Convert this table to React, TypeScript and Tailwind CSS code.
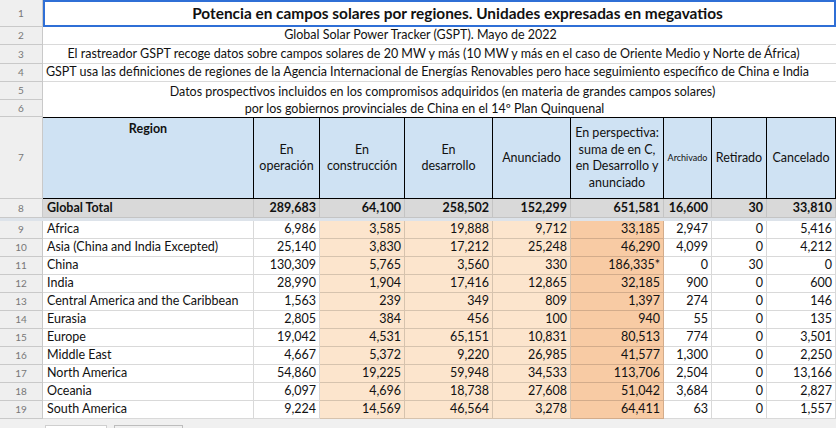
import React from "react";

const COLS = "grid-cols-[43px_211px_66px_85px_88px_78px_93px_48px_55px_69px]";

const data: string[][] = [
  ["Africa", "6,986", "3,585", "19,888", "9,712", "33,185", "2,947", "0", "5,416"],
  ["Asia (China and India Excepted)", "25,140", "3,830", "17,212", "25,248", "46,290", "4,099", "0", "4,212"],
  ["China", "130,309", "5,765", "3,560", "330", "186,335*", "0", "30", "0"],
  ["India", "28,990", "1,904", "17,416", "12,865", "32,185", "900", "0", "600"],
  ["Central America and the Caribbean", "1,563", "239", "349", "809", "1,397", "274", "0", "146"],
  ["Eurasia", "2,805", "384", "456", "100", "940", "55", "0", "135"],
  ["Europe", "19,042", "4,531", "65,151", "10,831", "80,513", "774", "0", "3,501"],
  ["Middle East", "4,667", "5,372", "9,220", "26,985", "41,577", "1,300", "0", "2,250"],
  ["North America", "54,860", "19,225", "59,948", "34,533", "113,706", "2,504", "0", "13,166"],
  ["Oceania", "6,097", "4,696", "18,738", "27,608", "51,042", "3,684", "0", "2,827"],
  ["South America", "9,224", "14,569", "46,564", "3,278", "64,411", "63", "0", "1,557"],
];

const total = ["Global Total", "289,683", "64,100", "258,502", "152,299", "651,581", "16,600", "30", "33,810"];

// fill per data column (index 0 = region)
const fills = ["bg-white", "bg-white", "bg-[#fce5cd]", "bg-[#fce5cd]", "bg-[#fce5cd]", "bg-[#f8cba4]", "bg-white", "bg-white", "bg-white"];

function RowNum({ n, className = "" }: { n: number | string; className?: string }) {
  return (
    <div
      className={`flex items-center justify-center border-r border-b border-[#c9c9c9] bg-[#efefef] text-[10px] text-[#777] ${className}`}
    >
      {n}
    </div>
  );
}

export default function App() {
  return (
    <div className="h-[428px] w-[836px] overflow-hidden bg-[#f0f0f0] font-['Lato',sans-serif] text-[12.5px] text-[#111]">
      <div
        className={`grid ${COLS} grid-rows-[27px_18px_19px_18px_18px_17px_82px_19px_3px_repeat(11,18px)]`}
      >
        {/* row 1 */}
        <RowNum n={1} />
        <div className="col-span-9 flex items-center justify-center whitespace-nowrap border-2 border-[#2f6fd6] bg-white pl-[36px] text-[15.4px] font-bold">
          Potencia en campos solares por regiones. Unidades expresadas en megavatios
        </div>

        {/* rows 2-4 */}
        <RowNum n={2} />
        <div className="col-span-9 flex items-center justify-center whitespace-nowrap border-b border-[#dadada] bg-white pr-[38px]">
          Global Solar Power Tracker (GSPT). Mayo de 2022
        </div>
        <RowNum n={3} />
        <div className="col-span-9 flex items-center justify-center whitespace-nowrap border-b border-[#dadada] bg-white pr-[12px]">
          El rastreador GSPT recoge datos sobre campos solares de 20 MW y más (10 MW y más en el caso de Oriente Medio y Norte de África)
        </div>
        <RowNum n={4} />
        <div className="col-span-9 flex items-center justify-center whitespace-nowrap border-b border-[#dadada] bg-white pr-[24px]">
          GSPT usa las definiciones de regiones de la Agencia Internacional de Energías Renovables pero hace seguimiento específico de China e India
        </div>

        {/* rows 5-6 merged */}
        <RowNum n={5} />
        <div className="col-span-9 row-span-2 flex flex-col items-center justify-center whitespace-nowrap bg-white leading-[17px]">
          <span className="pl-[6px]">Datos prospectivos incluidos en los compromisos adquiridos (en materia de grandes campos solares)</span>
          <span className="pr-[30px]">por los gobiernos provinciales de China en el 14º Plan Quinquenal</span>
        </div>
        <RowNum n={6} className="col-start-1" />

        {/* row 7 header */}
        <RowNum n={7} />
        <div className="flex justify-center border-y border-r border-black bg-[#cfe2f3] pt-[2px] font-bold">Region</div>
        {[
          ["En", "operación"],
          ["En", "construcción"],
          ["En", "desarrollo"],
          ["Anunciado"],
          ["En perspectiva:", "suma de en C,", "en Desarrollo y", "anunciado"],
        ].map((lines, i) => (
          <div
            key={i}
            className="flex flex-col items-center justify-center border-y border-r border-black bg-[#cfe2f3] text-center leading-[16.5px]"
          >
            {lines.map((l) => (
              <span key={l} className="whitespace-nowrap">{l}</span>
            ))}
          </div>
        ))}
        <div className="flex items-center justify-center border-y border-r border-black bg-[#cfe2f3] text-[9px]">Archivado</div>
        <div className="flex items-center justify-center border-y border-r border-black bg-[#cfe2f3]">Retirado</div>
        <div className="flex items-center justify-center border-y border-r border-black bg-[#cfe2f3]">Cancelado</div>

        {/* row 8 total */}
        <RowNum n={8} />
        {total.map((v, i) => (
          <div
            key={i}
            className={`flex items-center border-r border-b border-[#c4c4c4] bg-[#d9d9d9] font-bold ${
              i === 0 ? "pl-[4px]" : "justify-end pr-[3px]"
            }`}
          >
            {v}
          </div>
        ))}

        {/* frozen pane band */}
        <div className="col-span-10 bg-[#dde3ea]" />

        {/* data rows */}
        {data.map((row, r) => (
          <React.Fragment key={r}>
            <RowNum n={9 + r} />
            {row.map((v, i) => (
              <div
                key={i}
                className={`flex items-center whitespace-nowrap border-r border-b border-black/15 ${fills[i]} ${
                  i === 0 ? "pl-[4px]" : "justify-end pr-[3px]"
                }`}
              >
                {v}
              </div>
            ))}
          </React.Fragment>
        ))}
      </div>

      {/* sheet tabs */}
      <div className="flex gap-[7px] pl-[45px] pt-[6px]">
        <div className="h-[10px] w-[62px] border border-[#cfcfcf] bg-white" />
        <div className="h-[10px] w-[69px] border border-[#bdbdbd] bg-[#f0f0f0]" />
      </div>
    </div>
  );
}
